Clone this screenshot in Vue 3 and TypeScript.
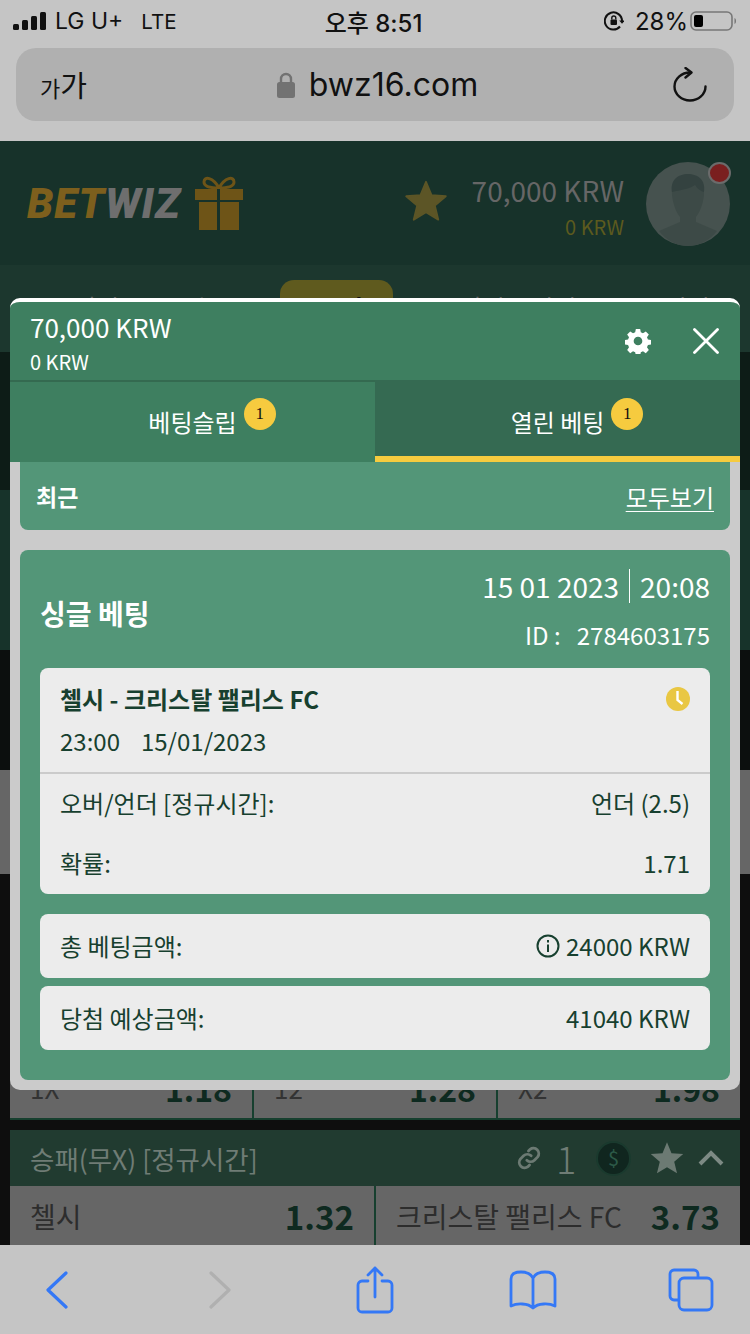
<template>
  <div class="phone">
    <div class="chrome-top">
      <div class="status">
        <div class="status-left">
          <svg class="signal" width="34" height="18" viewBox="0 0 34 18">
            <rect x="0" y="12" width="6" height="6" rx="1.5" />
            <rect x="9" y="8" width="6" height="10" rx="1.5" />
            <rect x="18" y="4" width="6" height="14" rx="1.5" />
            <rect x="27" y="0" width="6" height="18" rx="1.5" />
          </svg>
          <span>LG U+</span>
          <span class="lte">LTE</span>
        </div>
        <div class="status-time">오후 8:51</div>
        <div class="status-right">
          <svg width="20" height="22" viewBox="0 0 20 22" fill="none" stroke="#111" stroke-width="2">
            <path d="M16 16.500A8.600 8.600 0 1 1 18 11" />
            <path d="M15.200 10.500h5.600l-2.800 3.200z" fill="#111" stroke="none" />
            <rect x="6.500" y="9.500" width="6.500" height="5.500" rx="1" fill="#111" stroke="none" />
            <path d="M7.800 9.500V8a2 2 0 0 1 4 0v1.500" stroke-width="1.400" />
          </svg>
          <span class="pct">28%</span>
          <svg width="48" height="20" viewBox="0 0 48 20">
            <rect x="1" y="1" width="41" height="18" rx="5" fill="none" stroke="#777" stroke-width="1.600" />
            <rect x="4" y="4" width="9" height="12" rx="2" fill="#000" />
            <path d="M44.500 7c2 .6 2 5.400 0 6z" fill="#777" />
          </svg>
        </div>
      </div>
      <div class="urlbar">
        <span class="aa"><small>가</small>가</span>
        <div class="address">
          <svg width="18" height="26" viewBox="0 0 18 26">
            <path d="M4 11V7a5 5 0 0 1 10 0v4" fill="none" stroke="#727272" stroke-width="2.400" />
            <rect x="0" y="10" width="18" height="16" rx="2.500" fill="#727272" />
          </svg>
          <span>bwz16.com</span>
        </div>
        <svg width="34" height="35" viewBox="0 0 34 35" fill="none" stroke="#111" stroke-width="2.400" stroke-linecap="round" stroke-linejoin="round">
          <path d="M17 5.500A15.500 14 0 1 0 32.500 19.500" />
          <path d="M12.500 1l6 4.500-6 5" />
        </svg>
      </div>
    </div>

    <div class="page">
      <header class="site-head">
        <div class="logo"><b>BET</b><i>WIZ</i></div>
        <svg class="gift" width="48" height="54" viewBox="0 0 48 54">
          <path d="M24 12C18 1 9 0 9 6c0 5 8 6 15 6zM24 12c6-11 15-12 15-6 0 5-8 6-15 6z" fill="none" stroke="#6e5417" stroke-width="3" />
          <rect x="0" y="13" width="48" height="11" fill="#6e5417" />
          <rect x="4" y="26" width="40" height="28" fill="#6e5417" />
          <rect x="22" y="13" width="3" height="41" fill="#17322a" />
        </svg>
        <svg class="fav" width="44" height="44" viewBox="0 0 24 24">
          <path d="M12 1.500l3 7.300 7.800.6-6 5.100 1.900 7.700L12 18.100l-6.700 4.100 1.900-7.700-6-5.100 7.800-.6z" fill="#5c5526" stroke="#5c5526" stroke-linejoin="round" />
        </svg>
        <div class="balance">
          <div class="main-bal">70,000 KRW</div>
          <div class="bonus-bal">0 KRW</div>
        </div>
        <div class="avatar">
          <svg width="84" height="84" viewBox="0 0 84 84">
            <circle cx="42" cy="42" r="42" fill="#46524f" />
            <path d="M42 14c-11 0-17 8-16 19 1 9 4 17 8 22v5l-21 9c7 9 18 15 29 15s22-6 29-15l-21-9v-5c4-5 7-13 8-22 1-11-5-19-16-19z" fill="#3d4a47" />
            <path d="M26 30c-2-12 6-18 16-18s18 6 16 18c-6-2-8-6-9-7-5 4-15 5-23 7z" fill="#344240" />
          </svg>
          <span class="dot"></span>
        </div>
      </header>

      <nav class="site-nav">
        <span>라이브 스포츠</span>
        <span class="nav-on">스포츠</span>
        <span>라이브 카지노</span>
        <span>카지노</span>
      </nav>

      <div class="band b-dark"></div>
      <div class="band b-green"></div>
      <div class="band b-black"></div>
      <div class="band b-gray"></div>
      <div class="band b-black2"></div>

      <div class="market-wrap">
        <div class="odds three">
          <div class="cell"><span>1X</span><strong>1.18</strong></div>
          <div class="cell"><span>12</span><strong>1.28</strong></div>
          <div class="cell"><span>X2</span><strong>1.98</strong></div>
        </div>
        <div class="market-head">
          <span class="market-title">승패(무X) [정규시간]</span>
          <div class="market-tools">
            <svg width="26" height="26" viewBox="0 0 24 24" fill="none" stroke="#6c7a73" stroke-width="2.600" stroke-linecap="round">
              <path d="M10 14a5 5 0 0 0 7 0l3-3a5 5 0 0 0-7-7l-1.500 1.500" />
              <path d="M14 10a5 5 0 0 0-7 0l-3 3a5 5 0 0 0 7 7l1.500-1.500" />
            </svg>
            <span class="count">1</span>
            <div class="coin">$</div>
            <svg class="tool-star" width="36" height="36" viewBox="0 0 24 24">
              <path d="M12 1.500l3 7.300 7.800.6-6 5.100 1.900 7.700L12 18.100l-6.700 4.100 1.900-7.700-6-5.100 7.800-.6z" fill="#6c7a73" />
            </svg>
            <svg class="tool-up" width="26" height="16" viewBox="0 0 26 16" fill="none" stroke="#7d8a84" stroke-width="4">
              <path d="M2 14L13 3l11 11" />
            </svg>
          </div>
        </div>
        <div class="odds two">
          <div class="cell"><span>첼시</span><strong>1.32</strong></div>
          <div class="cell"><span>크리스탈 팰리스 FC</span><strong>3.73</strong></div>
        </div>
      </div>
    </div>

    <div class="toolbar">
      <svg width="24" height="38" viewBox="0 0 24 38" fill="none" stroke="#3478f6" stroke-width="3.200" stroke-linecap="round" stroke-linejoin="round">
        <path d="M21 2L3 19l18 17" />
      </svg>
      <svg class="t-fwd" width="24" height="38" viewBox="0 0 24 38" fill="none" stroke="#b0b0b0" stroke-width="3.200" stroke-linecap="round" stroke-linejoin="round">
        <path d="M3 2l18 17L3 36" />
      </svg>
      <svg class="t-share" width="38" height="48" viewBox="0 0 38 48" fill="none" stroke="#3478f6" stroke-width="2.800" stroke-linecap="round" stroke-linejoin="round">
        <path d="M12 15H6a4 4 0 0 0-4 4v23a4 4 0 0 0 4 4h26a4 4 0 0 0 4-4V19a4 4 0 0 0-4-4h-6" />
        <path d="M19 31V2M12 9l7-7 7 7" />
      </svg>
      <svg class="t-book" width="48" height="40" viewBox="0 0 48 40" fill="none" stroke="#3478f6" stroke-width="2.800" stroke-linecap="round" stroke-linejoin="round">
        <path d="M24 8C22 4 17 2 12 2 6 2 2 4 2 9v27c6-3 17-3 22 2 5-5 16-5 22-2V9c0-5-4-7-10-7-5 0-10 2-12 6zM24 8v30" />
      </svg>
      <svg class="t-tabs" width="46" height="44" viewBox="0 0 46 44" fill="none" stroke="#3478f6" stroke-width="2.800" stroke-linejoin="round">
        <path d="M10 32H6a4 4 0 0 1-4-4V6a4 4 0 0 1 4-4h20a4 4 0 0 1 4 4v4" />
        <rect x="11" y="10" width="33" height="32" rx="5" />
      </svg>
    </div>

    <section class="slip">
      <div class="slip-head">
        <div>
          <div class="slip-bal">70,000 KRW</div>
          <div class="slip-bonus">0 KRW</div>
        </div>
        <div class="slip-icons">
          <svg width="26" height="26" viewBox="0 0 24 24">
            <path fill="#fff" fill-rule="evenodd" d="M10 1h4l.6 3 2 .9 2.600-1.700 2.800 2.800-1.700 2.600.9 2 3 .6v4l-3 .6-.9 2 1.700 2.600-2.800 2.800-2.600-1.700-2 .9-.6 3h-4l-.6-3-2-.9-2.600 1.700-2.800-2.800 1.700-2.600-.9-2-3-.6v-4l3-.6.9-2-1.700-2.600 2.800-2.800 2.600 1.700 2-.9zM12 8a4 4 0 1 0 0 8 4 4 0 0 0 0-8z" />
          </svg>
          <svg width="26" height="26" viewBox="0 0 26 26" stroke="#fff" stroke-width="2.800" stroke-linecap="round">
            <path d="M1.500 1.500l23 23M24.500 1.500l-23 23" />
          </svg>
        </div>
      </div>

      <div class="tabs">
        <div class="tab">
          <span>베팅슬립<em>1</em></span>
        </div>
        <div class="tab tab-on">
          <span>열린 베팅<em>1</em></span>
        </div>
      </div>

      <div class="slip-body">
        <div class="recent">
          <strong>최근</strong>
          <a>모두보기</a>
        </div>

        <article class="bet">
          <div class="bet-top">
            <h3>싱글 베팅</h3>
            <div class="bet-meta">
              <div class="bet-date">15 01 2023 <i></i> 20:08</div>
              <div class="bet-id">ID :&nbsp;&nbsp; 2784603175</div>
            </div>
          </div>

          <div class="panel">
            <div class="match">
              <div class="match-name">
                <strong>첼시 - 크리스탈 팰리스 FC</strong>
                <svg width="24" height="24" viewBox="0 0 24 24">
                  <circle cx="12" cy="12" r="12" fill="#e9c743" />
                  <path d="M11.500 4v9l5 4" fill="none" stroke="#fff" stroke-width="2.400" />
                </svg>
              </div>
              <div class="match-time"><span>23:00</span><span>15/01/2023</span></div>
            </div>
            <div class="pick">
              <div class="row-line"><span>오버/언더 [정규시간]:</span><span>언더 (2.5)</span></div>
              <div class="row-line"><span>확률:</span><span>1.71</span></div>
            </div>
          </div>

          <div class="sum">
            <span>총 베팅금액:</span>
            <span class="sum-val">
              <svg width="24" height="24" viewBox="0 0 24 24" fill="none" stroke="#17402f" stroke-width="2">
                <circle cx="12" cy="12" r="10.500" />
                <path d="M12 10.500V18M12 6v2.400" />
              </svg>
              24000 KRW
            </span>
          </div>
          <div class="sum">
            <span>당첨 예상금액:</span>
            <span class="sum-val">41040 KRW</span>
          </div>
        </article>
      </div>
    </section>
  </div>
</template>

<script setup lang="ts">
</script>

<style>
html,
body {
  margin: 0;
  background: #0e0e0e;
}
</style>

<style scoped>
* {
  box-sizing: border-box;
}

.phone {
  position: relative;
  display: flex;
  flex-direction: column;
  width: 750px;
  height: 1334px;
  overflow: hidden;
  font-family: "Noto Sans CJK KR", "Noto Sans", sans-serif;
  background: #0e0e0e;
}

.chrome-top {
  height: 141px;
  flex: none;
  background: #c5c5c5;
  color: #111;
}

.status {
  display: grid;
  grid-template-columns: 1fr auto 1fr;
  align-items: center;
  height: 42px;
  padding: 0 12px 0 13px;
  font-family: Inter, "Noto Sans CJK KR", sans-serif;
  font-size: 23px;
}

.status-left {
  display: flex;
  align-items: center;
  gap: 8px;
}

.signal {
  fill: #111;
}

.lte {
  margin-left: 10px;
  font-size: 20.500px;
}

.status-time {
  margin-right: 4px;
  font-size: 24px;
  font-weight: 500;
}

.status-right {
  display: flex;
  align-items: center;
  justify-content: flex-end;
  gap: 5px;
}

.pct {
  margin-left: 6px;
  margin-right: -3px;
  font-size: 24px;
}

.urlbar {
  display: flex;
  align-items: center;
  justify-content: space-between;
  height: 73px;
  margin: 6px 16px 0;
  padding: 0 27px 0 24px;
  border-radius: 20px;
  background: #b0b0b0;
}

.aa {
  width: 50px;
  font-size: 29px;
  line-height: 1;
}

.aa small {
  font-size: 22px;
}

.address {
  display: flex;
  align-items: center;
  gap: 14px;
  margin-left: -8px;
  font-family: Inter, sans-serif;
  font-size: 32px;
}

.page {
  flex: 1;
  min-height: 0;
  overflow: hidden;
}

.site-head {
  display: flex;
  align-items: center;
  height: 124px;
  padding: 0 20px 0 27px;
  background: #17322a;
}

.logo {
  display: flex;
  font-family: Roboto, "Liberation Sans", sans-serif;
  font-size: 42px;
  font-weight: 900;
  font-style: italic;
  letter-spacing: 1px;
}

.logo b {
  color: #7d5f1d;
  font-weight: 900;
}

.logo i {
  color: #6e6e6e;
}

.gift {
  margin-left: 14px;
}

.fav {
  margin-top: -4px;
  margin-left: auto;
}

.balance {
  margin: 7px 22px 0 24px;
  text-align: right;
}

.main-bal {
  color: #666;
  font-size: 28px;
  line-height: 36px;
}

.bonus-bal {
  margin-top: 4px;
  color: #5c5a1e;
  font-size: 20px;
  line-height: 30px;
}

.avatar {
  position: relative;
  width: 84px;
  height: 84px;
  margin-top: 2px;
}

.avatar svg {
  display: block;
}

.dot {
  position: absolute;
  top: 0;
  right: -1px;
  width: 23px;
  height: 22px;
  border: 2px solid #6b6b6b;
  border-radius: 50%;
  background: #7a1f1f;
}

.site-nav {
  display: flex;
  align-items: flex-start;
  justify-content: space-between;
  height: 87px;
  padding: 15px 18px 0 75px;
  background: #1c372e;
  color: #6a6a6a;
  font-size: 24px;
  line-height: 54px;
}

.nav-on {
  width: 113px;
  border-radius: 14px;
  background: #5f5a1e;
  color: #111;
  font-weight: 700;
  text-align: center;
}

.band {
  height: 100px;
}

.b-dark {
  height: 138px;
  background: #0d1c17;
}

.b-green {
  height: 160px;
  background: #17332a;
}

.b-black {
  height: 120px;
  background: #0c0f0e;
}

.b-gray {
  height: 104px;
  background: #666;
}

.b-black2 {
  height: 196px;
  background: #0e0e0e;
}

.market-wrap {
  padding: 0 10px;
}

.odds {
  display: grid;
  background: #666;
}

.three {
  grid-template-columns: 242px 244px 1fr;
  height: 50px;
  border-bottom: 2px solid #17402f;
  margin-bottom: 10px;
}

.two {
  grid-template-columns: 364px 1fr;
  height: 60px;
}

.cell {
  display: flex;
  align-items: center;
  justify-content: space-between;
  padding: 0 20px;
  color: #2d2d2d;
  font-size: 28px;
}

.cell + .cell {
  border-left: 2px solid #17402f;
}

.three .cell {
  align-items: flex-start;
  padding-top: 0;
  color: #333;
  font-size: 26px;
  line-height: 36px;
}

.three .cell strong {
  font-size: 32px;
}

.cell strong {
  color: #0e2a20;
  font-size: 33px;
}

.market-head {
  display: flex;
  align-items: center;
  justify-content: space-between;
  height: 56px;
  padding: 0 16px 0 20px;
  background: #213b30;
  color: #6f7c75;
  font-size: 26.500px;
}

.market-tools {
  display: flex;
  align-items: center;
}

.count {
  width: 20px;
  margin-left: 14px;
  font-size: 38px;
  font-weight: 300;
  line-height: 1;
}

.coin {
  display: flex;
  align-items: center;
  justify-content: center;
  width: 35px;
  height: 35px;
  margin-left: 20px;
  border: 2px solid #1a3a2e;
  border-radius: 50%;
  background: #10261f;
  color: #2c5a48;
  font-size: 20px;
  line-height: 1;
}

.tool-star {
  margin-left: 18px;
}

.tool-up {
  margin-left: 13px;
}

.toolbar {
  display: flex;
  align-items: center;
  height: 89px;
  flex: none;
  padding-left: 45px;
  background: #c5c5c5;
}

.t-fwd {
  margin-left: 139px;
}

.t-share {
  margin-left: 124px;
}

.t-book {
  margin-left: 115px;
}

.t-tabs {
  margin-left: 111px;
}

.slip {
  position: absolute;
  top: 298px;
  left: 10px;
  width: 730px;
  height: 792px;
  overflow: hidden;
  border-top: 4px solid #fff;
  border-radius: 10px;
  background: #cbcbcb;
  color: #fff;
}

.slip-head {
  display: flex;
  align-items: center;
  justify-content: space-between;
  height: 78px;
  padding: 0 21px 0 20px;
  background: #3e7f60;
}

.slip-bal {
  margin-top: 3px;
  font-size: 26px;
  line-height: 36px;
}

.slip-bonus {
  margin-top: 2px;
  font-size: 20px;
  line-height: 30px;
}

.slip-icons {
  display: flex;
  align-items: center;
  gap: 42px;
}

.tabs {
  display: grid;
  grid-template-columns: 365px 365px;
  height: 82px;
  border-top: 2px solid #346a50;
}

.tab {
  display: flex;
  align-items: center;
  justify-content: center;
  background: #3e7f60;
  font-size: 24px;
  line-height: 36px;
}

.tab span {
  position: relative;
}

.tab-on {
  margin-top: -2px;
  padding-top: 8px;
  border-bottom: 6px solid #f6cb3f;
  background: #356a52;
}

.tab em {
  position: absolute;
  top: -6px;
  left: calc(100% + 7px);
  display: flex;
  align-items: center;
  justify-content: center;
  width: 32px;
  height: 32px;
  border-radius: 50%;
  background: #f6cb3f;
  color: #111;
  font-family: "Liberation Serif", serif;
  font-size: 17px;
  font-style: normal;
}

.slip-body {
  display: flex;
  flex-direction: column;
  gap: 20px;
  padding: 0 10px;
}

.recent {
  display: flex;
  align-items: center;
  justify-content: space-between;
  height: 68px;
  padding: 0 16px;
  border-radius: 0 0 8px 8px;
  background: #539678;
  font-size: 24px;
}

.recent strong {
  font-size: 23px;
}

.recent a {
  text-decoration: underline;
  text-underline-offset: 4px;
  text-decoration-thickness: 1px;
}

.bet {
  height: 530px;
  padding: 0 20px;
  border-radius: 8px;
  background: #539678;
}

.bet-top {
  display: flex;
  align-items: center;
  justify-content: space-between;
  height: 118px;
}

.bet-top h3 {
  margin: 8px 0 0;
  font-size: 28px;
  font-weight: 700;
}

.bet-meta {
  text-align: right;
}

.bet-date {
  display: flex;
  align-items: center;
  justify-content: flex-end;
  gap: 10px;
  font-size: 28px;
  line-height: 40px;
}

.bet-date i {
  width: 1px;
  height: 34px;
  background: #fff;
}

.bet-id {
  margin-top: 12px;
  font-size: 24px;
  line-height: 34px;
}

.panel {
  height: 226px;
  border-radius: 8px;
  background: #ececec;
  color: #17402f;
}

.match {
  height: 106px;
  padding: 0 20px;
  border-bottom: 2px solid #cbcbcb;
}

.match-name {
  display: flex;
  align-items: center;
  justify-content: space-between;
  padding-top: 13px;
  font-size: 24px;
  line-height: 36px;
}

.match-time {
  display: flex;
  gap: 21px;
  margin-top: 6px;
  font-size: 24px;
  line-height: 36px;
}

.pick {
  display: flex;
  flex-direction: column;
  gap: 24px;
  padding: 11px 20px 0;
}

.row-line,
.sum {
  display: flex;
  align-items: center;
  justify-content: space-between;
  font-size: 24px;
  line-height: 36px;
}

.sum {
  height: 64px;
  margin-top: 20px;
  padding: 0 20px;
  border-radius: 8px;
  background: #ececec;
  color: #17402f;
}

.sum + .sum {
  margin-top: 8px;
}

.sum-val {
  display: flex;
  align-items: center;
  gap: 6px;
}
</style>
